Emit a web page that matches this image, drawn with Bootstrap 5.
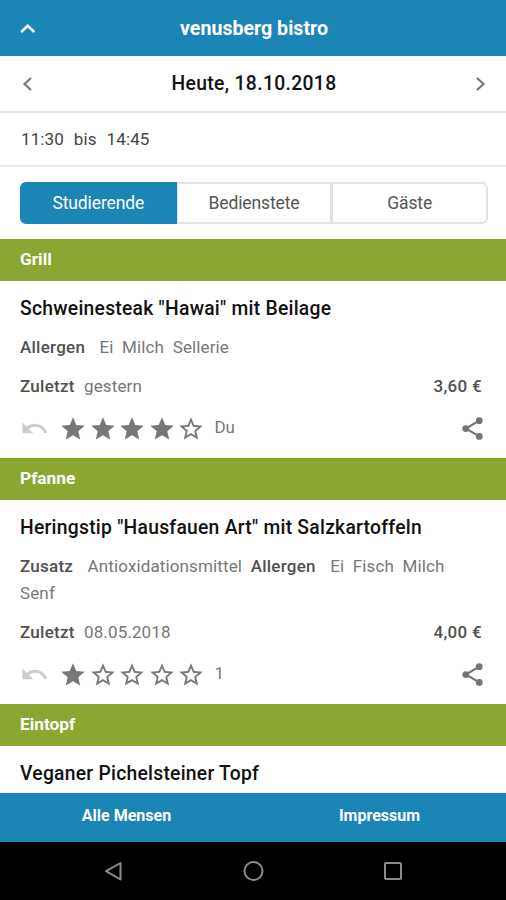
<!DOCTYPE html>
<html lang="de">
<head>
<meta charset="utf-8">
<meta name="viewport" content="width=device-width, initial-scale=1">
<title>venusberg bistro</title>
<link href="https://cdn.jsdelivr.net/npm/bootstrap@5.3.0/dist/css/bootstrap.min.css" rel="stylesheet">
<style>
body{font-family:Roboto,"Liberation Sans",sans-serif;font-size:17px;line-height:27px;color:#777;height:900px}
.blue{background:#1b85b6}
.topbar{height:56px;padding:0 19px 0 20px}
.topbar h1{font-size:19.6px;font-weight:700;line-height:27px;padding:1px 0 0 1px}
.datebar{height:57px;padding:0 20px;border-bottom:2px solid #e9e9e9}
.datebar strong{font-size:19.3px;font-weight:500;color:#111;letter-spacing:.35px;padding-left:2px}
.hours{height:54px;padding:0 21px;border-bottom:2px solid #e9e9e9;color:#444;gap:10px;letter-spacing:.1px}
.tariffs{padding:15px 18px 15px 20px}
.tariffs .btn{height:42px;padding:0;font-size:17.5px;line-height:38px;color:#555;border:2px solid #e2e2e2;letter-spacing:-.12px;flex:1 1 0}
.tariffs .btn.active{background:#1b85b6;border-color:#1b85b6;color:#fff}
.group-title{background:#8ba631;height:42px;padding:0 20px;color:#fff;font-size:17.3px;font-weight:700;line-height:40px;margin:0}
.meal{padding:14px 20px 0}
.meal h3{font-size:19.3px;font-weight:500;line-height:28px;color:#111;margin:0 0 11px;letter-spacing:.26px}
.facts{margin:0 0 12px;letter-spacing:.13px}
.facts b{font-weight:500;color:#505050;margin-right:10px;letter-spacing:.25px}
.facts span{margin-right:4.200px}
.last b{margin-right:5px}
.price{font-weight:500;color:#505050;padding-right:4px;letter-spacing:.3px}
.rating{height:57px}
.meal{padding-bottom:1px}
.stars{margin-left:10px;gap:1.600px}
.count{margin-left:9px;padding-bottom:2px;letter-spacing:-.1px}
.content-area{overflow:hidden}
.footer-links{height:49px;font-size:16px;font-weight:700;color:#fff;line-height:46px}
.softkeys{height:58px;background:#000}
</style>
<script src="https://cdn.jsdelivr.net/npm/bootstrap@5.3.0/dist/js/bootstrap.bundle.min.js"></script>
</head>
<body class="d-flex flex-column overflow-hidden bg-white">
<svg class="d-none">
<symbol id="star" viewBox="0 0 24 24"><path fill="#777" d="M12 17.27 18.18 21l-1.64-7.03L22 9.24l-7.19-.61L12 2 9.19 8.63 2 9.24l5.46 4.73L5.82 21z"/></symbol>
<symbol id="star-o" viewBox="0 0 24 24"><path fill="#777" d="m22 9.24-7.19-.62L12 2 9.19 8.63 2 9.24l5.46 4.73L5.82 21 12 17.27 18.18 21l-1.63-7.03zM12 15.4l-3.76 2.27 1-4.28-3.32-2.88 4.38-.38L12 6.1l1.71 4.04 4.38.38-3.32 2.88 1 4.28z"/></symbol>
<symbol id="undo" viewBox="0 0 24 24"><path fill="#ccc" d="M12.5 8c-2.65 0-5.05.99-6.900 2.600L2 7v9h9l-3.620-3.620c1.390-1.160 3.160-1.880 5.120-1.880 3.540 0 6.550 2.310 7.600 5.500l2.370-.78C21.080 11.030 17.150 8 12.500 8z"/></symbol>
<symbol id="share" viewBox="0 0 24 24"><path d="M18 5 6 12l12 7" fill="none" stroke="#757575" stroke-width="1.900"/><g fill="#757575"><circle cx="18" cy="5" r="3"/><circle cx="6" cy="12" r="3"/><circle cx="18" cy="19" r="3"/></g></symbol>
</svg>
<header class="topbar blue text-white d-flex align-items-center justify-content-between flex-shrink-0">
<svg width="16" height="16" viewBox="0 0 16 16"><path d="m1.200 12 6.500-6.300 6.500 6.300" fill="none" stroke="#fff" stroke-width="2.600"/></svg>
<h1 class="mb-0">venusberg bistro</h1><span class="px-2"></span>
</header>
<main class="content-area flex-grow-1">
<div class="datebar d-flex align-items-center justify-content-between">
<svg width="16" height="16" viewBox="0 0 16 16"><path d="M11 2 4.500 8l6.500 6" fill="none" stroke="#777" stroke-width="2.200"/></svg>
<strong>Heute, 18.10.2018</strong>
<svg width="16" height="16" viewBox="0 0 16 16"><path d="m7 2 6.500 6L7 14" fill="none" stroke="#777" stroke-width="2.200"/></svg>
</div>
<div class="hours d-flex align-items-center"><span>11:30</span><span>bis</span><span>14:45</span></div>
<div class="tariffs"><div class="btn-group d-flex"><button class="btn active">Studierende</button><button class="btn">Bedienstete</button><button class="btn">Gäste</button></div></div>

<h2 class="group-title">Grill</h2>
<article class="meal">
<h3>Schweinesteak "Hawai" mit Beilage</h3>
<p class="facts"><b>Allergen</b> <span>Ei</span> <span>Milch</span> <span>Sellerie</span></p>
<div class="d-flex justify-content-between"><div class="facts last mb-0"><b>Zuletzt</b> <span>gestern</span></div><div class="price">3,60 €</div></div>
<div class="rating d-flex align-items-center">
<svg width="29" height="29"><use href="#undo"/></svg>
<div class="stars d-flex"><svg width="28" height="28"><use href="#star"/></svg><svg width="28" height="28"><use href="#star"/></svg><svg width="28" height="28"><use href="#star"/></svg><svg width="28" height="28"><use href="#star"/></svg><svg width="28" height="28"><use href="#star-o"/></svg></div>
<span class="count">Du</span><svg class="ms-auto" width="27" height="27"><use href="#share"/></svg>
</div>
</article>

<h2 class="group-title">Pfanne</h2>
<article class="meal">
<h3>Heringstip "Hausfauen Art" mit Salzkartoffeln</h3>
<p class="facts"><b>Zusatz</b> <span>Antioxidationsmittel</span> <b>Allergen</b> <span>Ei</span> <span>Fisch</span> <span>Milch</span> <span>Senf</span></p>
<div class="d-flex justify-content-between"><div class="facts last mb-0"><b>Zuletzt</b> <span>08.05.2018</span></div><div class="price">4,00 €</div></div>
<div class="rating d-flex align-items-center">
<svg width="29" height="29"><use href="#undo"/></svg>
<div class="stars d-flex"><svg width="28" height="28"><use href="#star"/></svg><svg width="28" height="28"><use href="#star-o"/></svg><svg width="28" height="28"><use href="#star-o"/></svg><svg width="28" height="28"><use href="#star-o"/></svg><svg width="28" height="28"><use href="#star-o"/></svg></div>
<span class="count">1</span><svg class="ms-auto" width="27" height="27"><use href="#share"/></svg>
</div>
</article>

<h2 class="group-title">Eintopf</h2>
<article class="meal"><h3>Veganer Pichelsteiner Topf</h3></article>
</main>
<footer class="flex-shrink-0">
<nav class="footer-links blue d-flex text-center"><div class="w-50">Alle Mensen</div><div class="w-50">Impressum</div></nav>
<div class="softkeys d-flex align-items-center justify-content-center">
<svg width="320" height="24" viewBox="0 0 320 24" fill="none" stroke="#8c8c8c" stroke-width="2"><path d="M27.500 4v16.500L13 12.200z" stroke-linejoin="round"/><circle cx="160.500" cy="12" r="9"/><rect x="292" y="4" width="16" height="16" rx="1"/></svg>
</div>
</footer>
</body>
</html>
